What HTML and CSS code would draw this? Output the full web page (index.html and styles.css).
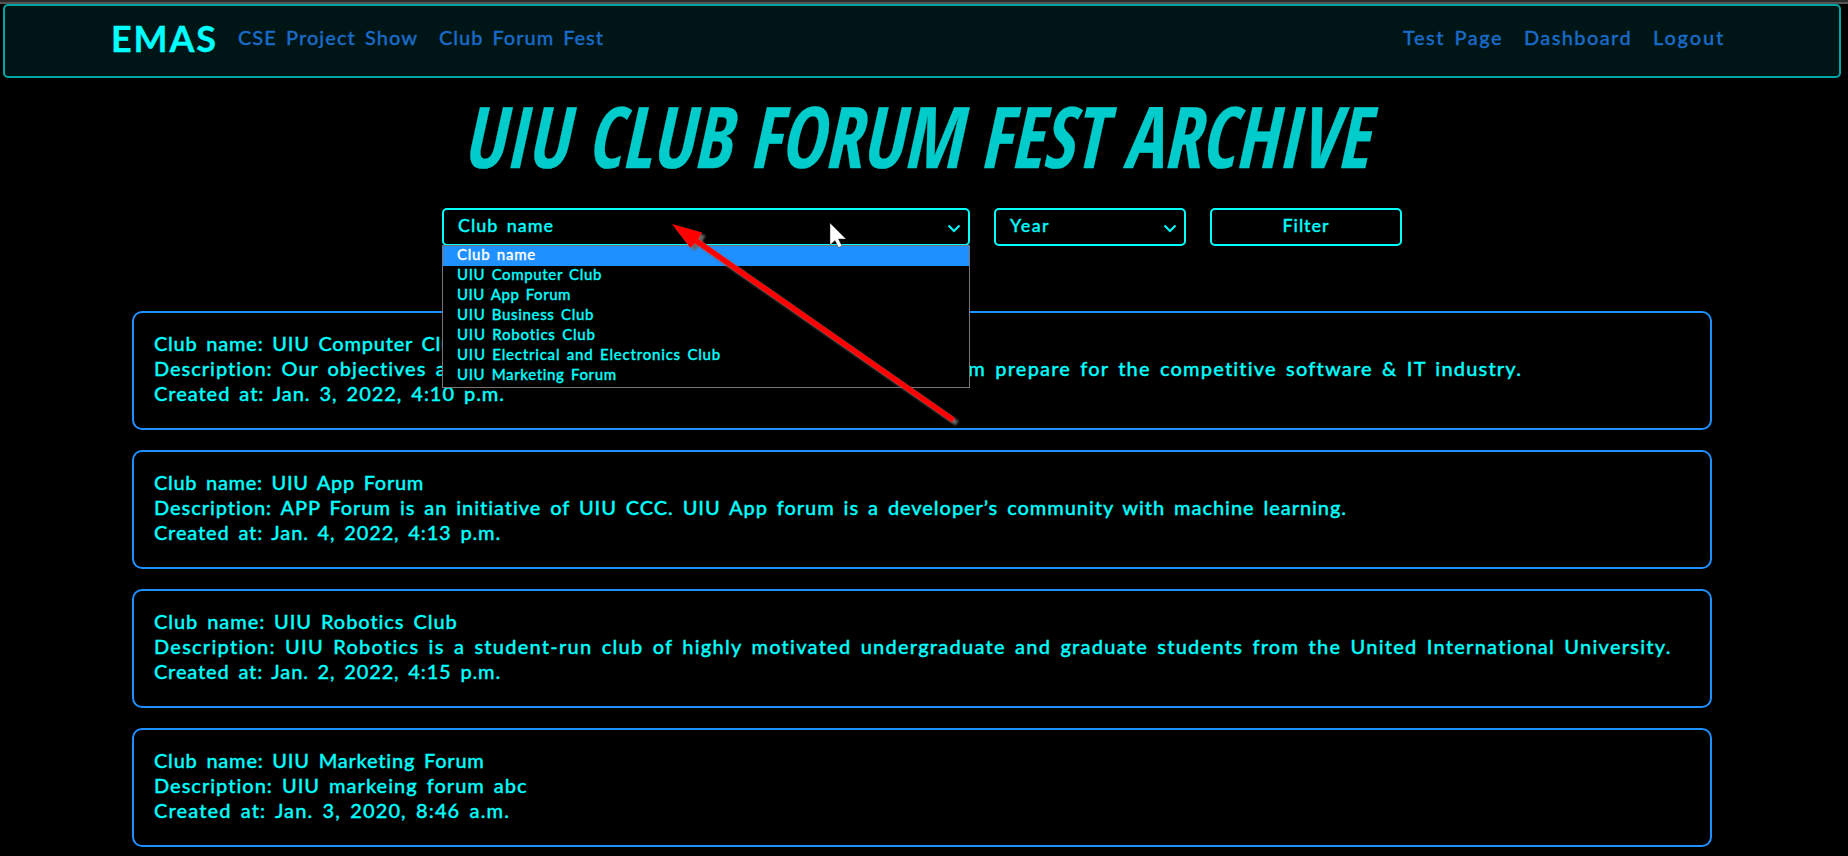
FILE: index.html
```html
<!DOCTYPE html>
<html lang="en">
<head>
<meta charset="utf-8">
<title>UIU Club Forum Fest Archive</title>
<link rel="stylesheet" href="styles.css">
</head>
<body>
<nav class="navbar">
  <a class="brand" data-w="107">EMAS</a>
  <div class="links"><a data-w="180">CSE Project Show</a><a data-w="165">Club Forum Fest</a></div>
  <div class="links right"><a data-w="100">Test Page</a><a data-w="108">Dashboard</a><a data-w="72">Logout</a></div>
</nav>
<h1 class="title"><span>UIU CLUB FORUM FEST ARCHIVE</span></h1>
<form class="filters">
  <div class="field club"><span data-w="96">Club name</span>
    <svg class="chevron" viewBox="0 0 14 9"><path d="M1.500 1.500 7 7l5.500-5.500"/></svg>
    <ul class="menu">
      <li class="active"><span data-w="79">Club name</span></li>
      <li><span data-w="145">UIU Computer Club</span></li>
      <li><span data-w="114">UIU App Forum</span></li>
      <li><span data-w="137">UIU Business Club</span></li>
      <li><span data-w="139">UIU Robotics Club</span></li>
      <li><span data-w="264">UIU Electrical and Electronics Club</span></li>
      <li><span data-w="160">UIU Marketing Forum</span></li>
    </ul>
  </div>
  <div class="field"><span data-w="40">Year</span>
    <svg class="chevron" viewBox="0 0 14 9"><path d="M1.500 1.500 7 7l5.500-5.500"/></svg>
  </div>
  <div class="field button"><span data-w="47">Filter</span></div>
</form>
<main class="cards">
  <article class="card">
    <p><span data-w="311">Club name: UIU Computer Club</span></p>
    <p><span data-w="273">Description: Our objectives</span><span data-w="569"> are to teach students programming and to help them </span><span data-w="527">prepare for the competitive software &amp; IT industry.</span></p>
    <p><span data-w="351">Created at: Jan. 3, 2022, 4:10 p.m.</span></p>
  </article>
  <article class="card">
    <p><span data-w="270">Club name: UIU App Forum</span></p>
    <p><span data-w="1194">Description: APP Forum is an initiative of UIU CCC. UIU App forum is a developer’s community with machine learning.</span></p>
    <p><span data-w="347">Created at: Jan. 4, 2022, 4:13 p.m.</span></p>
  </article>
  <article class="card">
    <p><span data-w="304">Club name: UIU Robotics Club</span></p>
    <p><span data-w="1519">Description: UIU Robotics is a student-run club of highly motivated undergraduate and graduate students from the United International University.</span></p>
    <p><span data-w="347">Created at: Jan. 2, 2022, 4:15 p.m.</span></p>
  </article>
  <article class="card">
    <p><span data-w="331">Club name: UIU Marketing Forum</span></p>
    <p><span data-w="374">Description: UIU markeing forum abc</span></p>
    <p><span data-w="356">Created at: Jan. 3, 2020, 8:46 a.m.</span></p>
  </article>
</main>
<svg class="overlay" viewBox="0 0 1848 856">
  <defs><filter id="shadow"><feDropShadow dx="3.500" dy="3" stdDeviation="1" flood-color="#666"/></filter></defs>
  <path class="arrow" filter="url(#shadow)" d="M672 224 702 232.500 698.500 239 955 418 952 422.500 695 243.500 690.500 248z"/>
  <path class="cursor" d="M830 223v22l5-4.500 3.500 7 3.500-1.500-3.500-7h7.500z"/>
</svg>
<script src="fit.js"></script>
</body>
</html>
```
FILE: styles.css
```css
* { box-sizing: border-box; }
body {
  margin: 0;
  height: 856px;
  overflow: hidden;
  background: #000;
  color: #0ff;
  font: 500 20px/25px Lato, "Open Sans", sans-serif;
  word-spacing: 3px;
  -webkit-text-stroke: .3px currentColor;
  border-top: 2px solid #2b2b2b;
}
body::before { content: ""; display: block; height: 2px; background: #555; }
[data-w] { display: inline-block; white-space: pre; }
.navbar {
  display: flex;
  align-items: flex-start;
  height: 74px;
  margin: 0 7px 0 3px;
  padding: 0 114px 0 106px;
  border: 2px solid #00a5a5;
  border-radius: 5px;
  background: #001616;
}
.brand { font-weight: 700; font-size: 36px; line-height: 44px; padding-top: 10px; }
.links { display: flex; gap: 21px; margin-left: 20px; padding-top: 19px; color: #1a6bc8; }
.links.right { margin-left: auto; }
.title {
  margin: 0 18px 0 0;
  height: 130px;
  padding-top: 15px;
  text-align: center;
  font: italic 700 85px/84px "Open Sans Condensed", "Open Sans", sans-serif;
  word-spacing: 0;
  color: #00cccc;
}
.title span { display: inline-block; white-space: nowrap; transform: scaleX(.876); }
.filters { display: flex; gap: 24px; margin-left: 442px; font-size: 18px; line-height: 22px; }
.field {
  position: relative;
  display: flex;
  justify-content: space-between;
  width: 192px;
  height: 38px;
  padding: 4px 7px 0 14px;
  border: 2px solid #0ff;
  border-radius: 5px;
}
.field.club { width: 528px; }
.field.button { justify-content: center; padding-left: 7px; }
.chevron { width: 14px; height: 9px; margin-top: 10px; fill: none; stroke: #0ff; stroke-width: 2; }
.menu {
  position: absolute;
  z-index: 1;
  top: 35px;
  left: -2px;
  width: 528px;
  height: 143px;
  margin: 0;
  padding: 0;
  list-style: none;
  border: 1px solid #767676;
  background: #000;
  font-size: 15px;
  line-height: 17px;
  word-spacing: 2px;
}
.menu li { height: 20px; padding-left: 14px; }
.menu .active { background: #1e90ff; color: #fff; }
.cards { display: flex; flex-direction: column; gap: 20px; margin: 65px 136px 0 132px; }
.card { height: 119px; padding: 18px 20px 0 20px; border: 2px solid #1e90ff; border-radius: 10px; }
.card p { margin: 0; height: 25px; white-space: nowrap; }
.overlay { position: absolute; z-index: 2; top: 0; left: 0; width: 1848px; height: 856px; pointer-events: none; }
.arrow { fill: #f00; }
.cursor { fill: #fff; stroke: #333; stroke-width: .5; }
```
FILE: fit.js
```js
// Tracks each label out to its set width.
for (const el of document.querySelectorAll("[data-w]")) {
  const extra = el.dataset.w - el.getBoundingClientRect().width;
  el.style.letterSpacing = extra / el.textContent.length + "px";
}
```
